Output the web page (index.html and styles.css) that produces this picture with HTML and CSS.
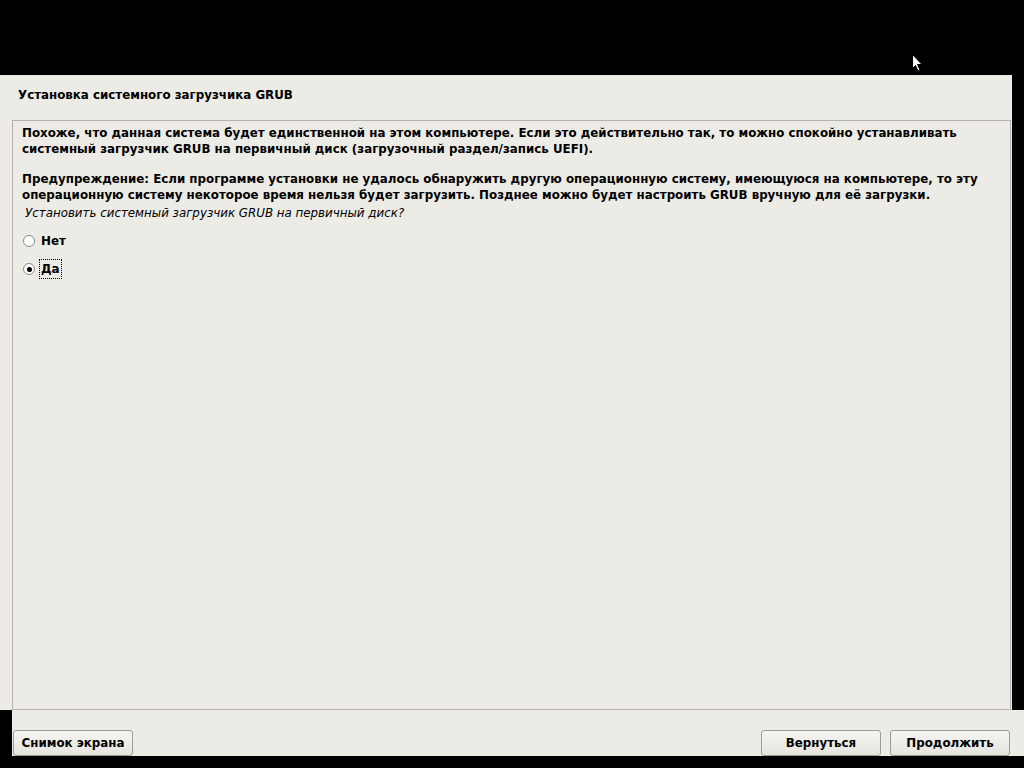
FILE: index.html
```html
<!DOCTYPE html>
<html lang="ru">
<head>
<meta charset="utf-8">
<link rel="stylesheet" href="styles.css">
</head>
<body>
<div class="screen">
  <svg class="cursor" width="12" height="18" viewBox="0 0 12 18"><path d="M0.5 0.5 L0.5 14.5 L3.5 11.5 L6 17 L8 16 L5.5 10.5 L10 10.5 Z" fill="#fff" stroke="#000" stroke-width="1"/></svg>
  <div class="window">
    <div class="title">Установка системного загрузчика GRUB</div>
    <div class="frame">
      <p class="para">Похоже, что данная система будет единственной на этом компьютере. Если это действительно так, то можно спокойно устанавливать системный загрузчик GRUB на первичный диск (загрузочный раздел/запись UEFI).</p>
      <p class="para">Предупреждение: Если программе установки не удалось обнаружить другую операционную систему, имеющуюся на компьютере, то эту операционную систему некоторое время нельзя будет загрузить. Позднее можно будет настроить GRUB вручную для её загрузки.</p>
      <p class="question">Установить системный загрузчик GRUB на первичный диск?</p>
      <div class="options">
        <div class="option"><span class="radio"></span><span class="label">Нет</span></div>
        <div class="option"><span class="radio checked"></span><span class="label focus">Да</span></div>
      </div>
    </div>
  </div>
  <div class="buttons">
    <button class="btn">Снимок экрана</button>
    <span class="spacer"></span>
    <button class="btn">Вернуться</button>
    <button class="btn">Продолжить</button>
  </div>
</div>
</body>
</html>
```
FILE: styles.css
```css
html, body {
  margin: 0;
  padding: 0;
  background: #000;
}
.screen {
  position: relative;
  width: 1024px;
  height: 768px;
  background: #000;
  padding-top: 75px;
  box-sizing: border-box;
  font-family: "DejaVu Sans", sans-serif;
  color: #000;
}
.cursor {
  position: absolute;
  left: 912px;
  top: 54px;
}
.window {
  width: 1012px;
  height: 635px;
  background: #edebe6;
  display: flex;
  flex-direction: column;
}
.title {
  height: 45px;
  box-sizing: border-box;
  padding: 12px 0 0 18px;
  font-weight: bold;
  font-size: 11.85px;
  line-height: 16px;
}
.frame {
  margin-left: 12px;
  width: 999px;
  flex: 1;
  border: 1px solid #b4b2ab;
  box-sizing: border-box;
  padding: 5px 0 0 9px;
}
.para {
  margin: 0 0 15px 0;
  font-weight: bold;
  font-size: 11.85px;
  line-height: 15.5px;
  width: 985px;
}
.question {
  margin: -13px 0 0 3px;
  font-style: italic;
  font-size: 11.85px;
  line-height: 16px;
}
.options {
  margin-top: 6px;
  margin-left: 1px;
}
.option {
  display: flex;
  align-items: center;
  height: 28px;
}
.radio {
  width: 12px;
  height: 12px;
  border: 1px solid #8c8a85;
  border-radius: 50%;
  background: #fff;
  box-sizing: border-box;
  margin-right: 4px;
  position: relative;
}
.radio.checked::after {
  content: "";
  position: absolute;
  left: 2.5px;
  top: 2.5px;
  width: 5px;
  height: 5px;
  border-radius: 50%;
  background: #000;
}
.label {
  font-weight: bold;
  font-size: 11.85px;
  line-height: 16px;
  padding: 1px 1px;
  border: 1px solid transparent;
}
.label.focus {
  border: 1px dotted #000;
}
.buttons {
  margin-left: 12px;
  width: 1012px;
  height: 46px;
  background: #edebe6;
  display: flex;
  align-items: flex-start;
  padding: 20px 14px 0 1px;
  box-sizing: border-box;
  gap: 9px;
}
.spacer {
  flex: 1;
}
.btn {
  width: 120px;
  height: 26px;
  background: linear-gradient(#f6f5f3, #e6e4df);
  border: 1px solid #9d9b95;
  border-radius: 3px;
  font-family: "DejaVu Sans", sans-serif;
  font-weight: bold;
  font-size: 11.85px;
  color: #000;
  padding: 0;
}
```
